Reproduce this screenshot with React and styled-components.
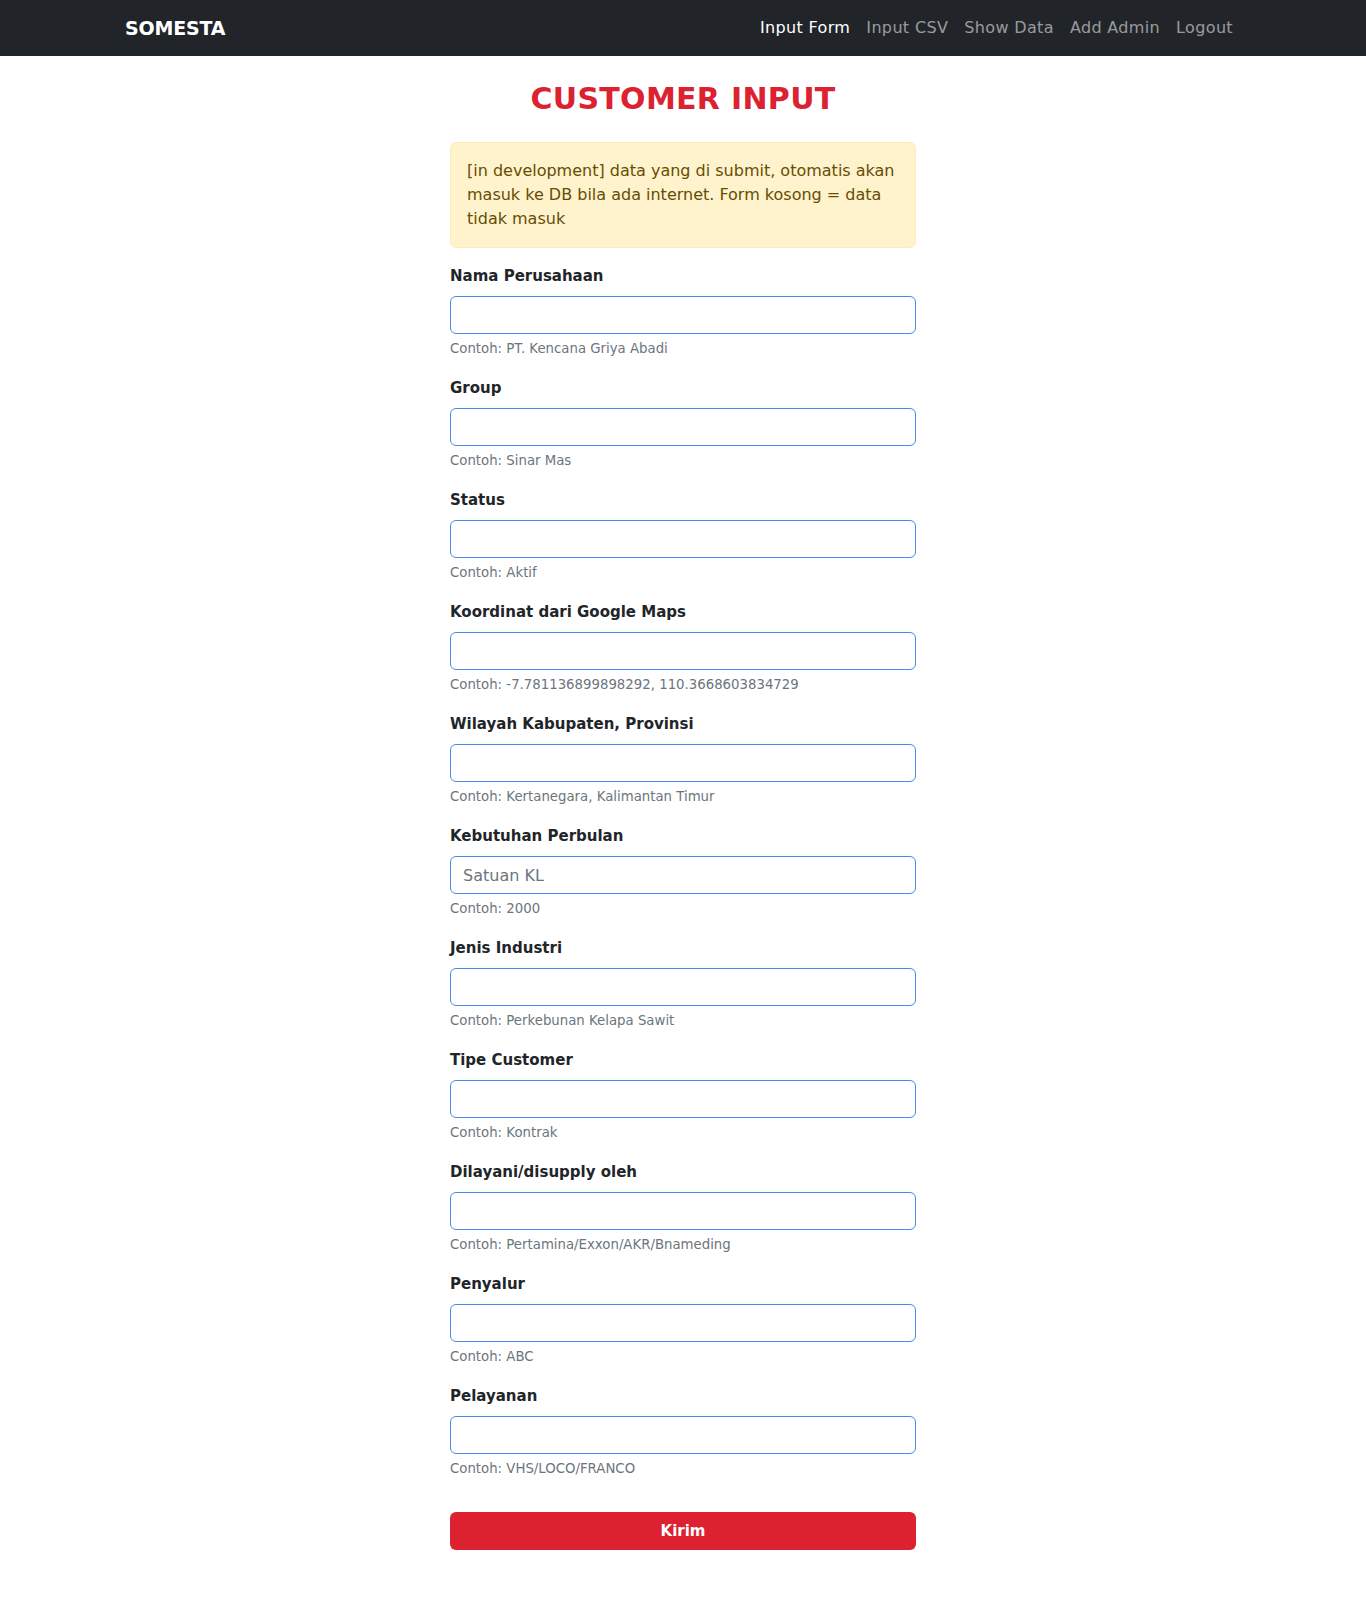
import React from 'react';
import styled, { createGlobalStyle } from 'styled-components';

const GlobalStyle = createGlobalStyle`
    * {
        box-sizing: border-box;
    }

    body {
        margin: 0;
        background: #ffffff;
        font-family: "DejaVu Sans", "Open Sans", sans-serif;
        color: #212529;
    }
`;

const Navbar = styled.nav`
    background-color: #212529;
    height: 56px;
    display: flex;
    align-items: center;
`;

const NavInner = styled.div`
    width: 1140px;
    margin: 0 auto;
    padding: 0 12px;
    display: flex;
    justify-content: space-between;
    align-items: center;
`;

const Brand = styled.a`
    color: #ffffff;
    font-size: 19px;
    font-weight: 700;
    text-decoration: none;
    letter-spacing: -0.2px;
`;

const NavLinks = styled.div`
    display: flex;
    align-items: center;
`;

const NavLink = styled.a`
    padding: 7px 8px 8px;
    font-size: 16px;
    letter-spacing: 0.35px;
    text-decoration: none;
    color: ${(p) => (p.$active ? '#ffffff' : 'rgba(255, 255, 255, 0.55)')};
`;

const Main = styled.main`
    width: 466px;
    margin: 0 auto;
    padding: 24px 0 48px;
`;

const Title = styled.h1`
    margin: 0 0 24px;
    text-align: center;
    color: #dc2130;
    font-size: 30px;
    letter-spacing: 0.3px;
    line-height: 38px;
    font-weight: 700;
`;

const Alert = styled.div`
    background-color: #fff3cd;
    border: 1px solid #ffecb5;
    border-radius: 6px;
    color: #664d03;
    padding: 16px;
    font-size: 16px;
    line-height: 24px;
    margin-bottom: 16px;
`;

const Group = styled.div`
    margin-bottom: 17px;
`;

const Label = styled.label`
    display: block;
    font-weight: 700;
    font-size: 15px;
    line-height: 24px;
    margin-bottom: 8px;
`;

const Input = styled.input`
    display: block;
    width: 100%;
    height: 38px;
    padding: 6px 12px;
    font-family: inherit;
    font-size: 16px;
    line-height: 24px;
    color: #212529;
    border: 1px solid #4a89ee;
    border-radius: 6px;
    outline: none;

    &::placeholder {
        color: #6c757d;
    }
`;

const Help = styled.div`
    margin-top: 4px;
    font-size: 13.3px;
    line-height: 21px;
    color: #6c757d;
`;

const SubmitButton = styled.button`
    display: block;
    width: 100%;
    height: 38px;
    margin-top: 33px;
    border: none;
    border-radius: 6px;
    background-color: #dc2130;
    color: #ffffff;
    font-family: inherit;
    font-size: 15px;
    font-weight: 700;
`;

const fields = [
    { label: 'Nama Perusahaan', help: 'Contoh: PT. Kencana Griya Abadi' },
    { label: 'Group', help: 'Contoh: Sinar Mas' },
    { label: 'Status', help: 'Contoh: Aktif' },
    { label: 'Koordinat dari Google Maps', help: 'Contoh: -7.781136899898292, 110.3668603834729' },
    { label: 'Wilayah Kabupaten, Provinsi', help: 'Contoh: Kertanegara, Kalimantan Timur' },
    { label: 'Kebutuhan Perbulan', help: 'Contoh: 2000', placeholder: 'Satuan KL' },
    { label: 'Jenis Industri', help: 'Contoh: Perkebunan Kelapa Sawit' },
    { label: 'Tipe Customer', help: 'Contoh: Kontrak' },
    { label: 'Dilayani/disupply oleh', help: 'Contoh: Pertamina/Exxon/AKR/Bnameding' },
    { label: 'Penyalur', help: 'Contoh: ABC' },
    { label: 'Pelayanan', help: 'Contoh: VHS/LOCO/FRANCO' },
];

const App = () => {
    return (
        <>
            <GlobalStyle />
            <Navbar>
                <NavInner>
                    <Brand href="#">SOMESTA</Brand>
                    <NavLinks>
                        <NavLink href="#" $active>Input Form</NavLink>
                        <NavLink href="#">Input CSV</NavLink>
                        <NavLink href="#">Show Data</NavLink>
                        <NavLink href="#">Add Admin</NavLink>
                        <NavLink href="#">Logout</NavLink>
                    </NavLinks>
                </NavInner>
            </Navbar>

            <Main>
                <Title>CUSTOMER INPUT</Title>
                <Alert>
                    [in development] data yang di submit, otomatis akan masuk ke DB bila ada
                    internet. Form kosong = data tidak masuk
                </Alert>

                <form onSubmit={(e) => e.preventDefault()}>
                    {fields.map((f) => (
                        <Group key={f.label}>
                            <Label>{f.label}</Label>
                            <Input type="text" placeholder={f.placeholder} />
                            <Help>{f.help}</Help>
                        </Group>
                    ))}
                    <SubmitButton type="submit">Kirim</SubmitButton>
                </form>
            </Main>
        </>
    );
};

export default App;
